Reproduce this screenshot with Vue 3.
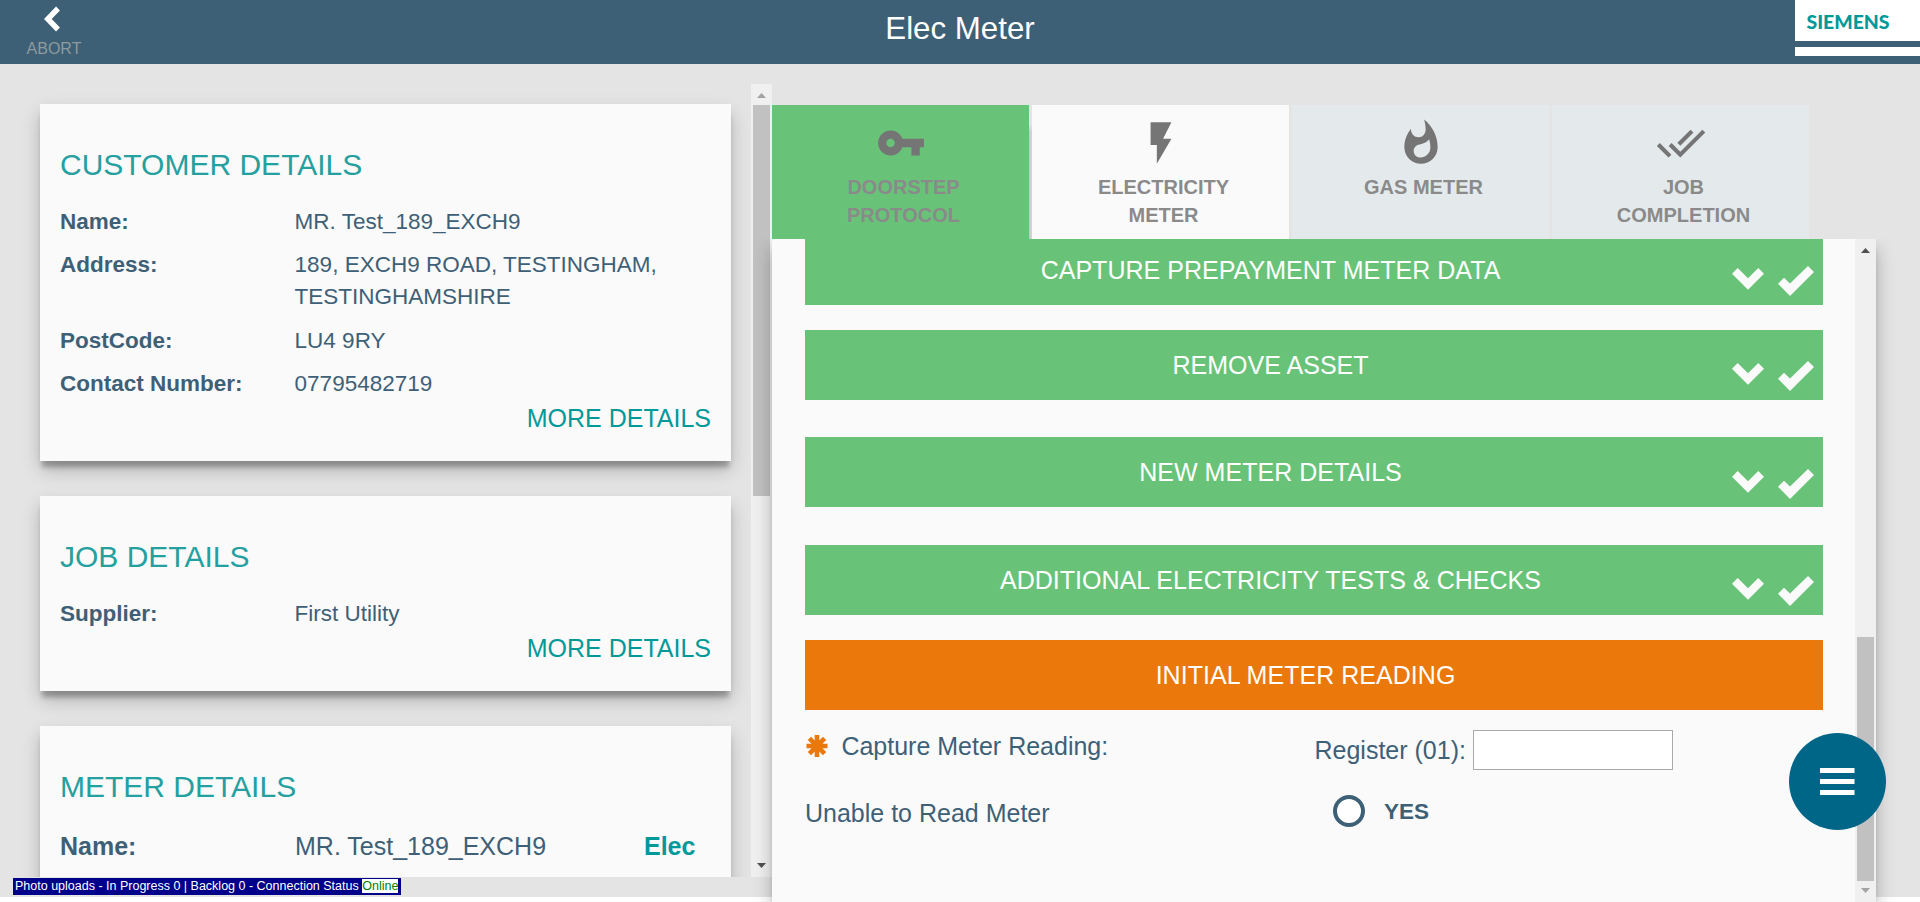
<script setup>
const cards = [
  {
    title: 'CUSTOMER DETAILS',
    kind: 'customer',
    rows: [
      { label: 'Name:', lines: ['MR. Test_189_EXCH9'] },
      { label: 'Address:', lines: ['189, EXCH9 ROAD, TESTINGHAM,', 'TESTINGHAMSHIRE'] },
      { label: 'PostCode:', lines: ['LU4 9RY'] },
      { label: 'Contact Number:', lines: ['07795482719'] },
    ],
    more: true,
  },
  {
    title: 'JOB DETAILS',
    kind: 'job',
    rows: [{ label: 'Supplier:', lines: ['First Utility'] }],
    more: true,
  },
  {
    title: 'METER DETAILS',
    kind: 'meter',
    rows: [{ label: 'Name:', lines: ['MR. Test_189_EXCH9'], tag: 'Elec' }],
    more: false,
  },
]

const tabs = [
  {
    lines: ['DOORSTEP', 'PROTOCOL'],
    state: 'done',
    icon: 'M12.65 10C11.83 7.67 9.61 6 7 6c-3.31 0-6 2.69-6 6s2.69 6 6 6c2.61 0 4.83-1.67 5.65-4H17v4h4v-4h2v-4H12.65zM7 14c-1.1 0-2-.9-2-2s.9-2 2-2 2 .9 2 2-.9 2-2 2z',
  },
  { lines: ['ELECTRICITY', 'METER'], state: 'active', icon: 'M7 2v11h3v9l7-12h-4l4-8z' },
  {
    lines: ['GAS METER'],
    state: 'idle',
    icon: 'M13.5.67s.74 2.65.74 4.8c0 2.06-1.35 3.73-3.41 3.73-2.07 0-3.63-1.67-3.63-3.73l.03-.36C5.21 7.51 4 10.62 4 14c0 4.42 3.58 8 8 8s8-3.58 8-8C20 8.61 17.41 3.8 13.5.67zM11.71 19c-1.78 0-3.22-1.4-3.22-3.14 0-1.62 1.05-2.76 2.81-3.12 1.77-.36 3.6-1.21 4.62-2.58.39 1.29.59 2.65.59 4.04 0 2.65-2.15 4.8-4.8 4.8z',
  },
  {
    lines: ['JOB', 'COMPLETION'],
    state: 'idle',
    icon: 'M18 7l-1.41-1.41-6.34 6.34 1.41 1.41L18 7zm4.24-1.41L11.66 16.17 7.48 12l-1.41 1.41L11.66 19l12-12-1.42-1.41zM.41 13.41L6 19l1.41-1.41L1.83 12 .41 13.41z',
  },
]

const sections = [
  { title: 'CAPTURE PREPAYMENT METER DATA', gap: 'near' },
  { title: 'REMOVE ASSET', gap: 'far' },
  { title: 'NEW METER DETAILS', gap: 'farther', low: true },
  { title: 'ADDITIONAL ELECTRICITY TESTS & CHECKS', gap: 'near' },
]
</script>

<template>
  <div class="page">
    <header class="topbar">
      <button class="abort">
        <svg class="back" width="16" height="26" viewBox="0 0 16 26">
          <path d="M14 2.5L3.8 13 14 23.5" fill="none" stroke="#fff" stroke-width="5.4" />
        </svg>
        <span>ABORT</span>
      </button>
      <h1>Elec Meter</h1>
      <div class="logo">
        <svg width="125" height="41" viewBox="0 0 125 41">
          <text x="11.5" y="28.6" textLength="83" lengthAdjust="spacingAndGlyphs">SIEMENS</text>
        </svg>
        <div class="stripe"></div>
      </div>
    </header>

    <div class="body">
      <div class="left">
        <div class="scroller">
          <div class="cards">
            <section v-for="c in cards" :key="c.title" class="card" :class="c.kind">
              <h2>{{ c.title }}</h2>
              <div class="rows">
                <div v-for="r in c.rows" :key="r.label" class="row">
                  <b class="label">{{ r.label }}</b>
                  <div class="value">
                    <div v-for="l in r.lines" :key="l">{{ l }}</div>
                  </div>
                  <b v-if="r.tag" class="tag">{{ r.tag }}</b>
                </div>
              </div>
              <a v-if="c.more" class="more">MORE DETAILS</a>
            </section>
          </div>
          <div class="bar">
            <svg class="arrow" width="21" height="21" viewBox="0 0 21 21"><path d="M6 14h9l-4.5-5z" fill="#a3a3a3" /></svg>
            <div class="thumb thumb-left"></div>
            <svg class="arrow end" width="21" height="21" viewBox="0 0 21 21"><path d="M6 7h9l-4.5 5z" fill="#505050" /></svg>
          </div>
        </div>
        <div class="status">
          Photo uploads - In Progress 0 | Backlog 0 - Connection Status <span class="online">Online</span>
        </div>
      </div>

      <div class="right">
        <nav class="tabs">
          <div v-for="t in tabs" :key="t.lines[0]" class="tab" :class="t.state">
            <svg width="50" height="50" viewBox="0 0 24 24"><path :d="t.icon" fill="#757575" /></svg>
            <div class="tab-label">
              <div v-for="l in t.lines" :key="l">{{ l }}</div>
            </div>
          </div>
        </nav>

        <main class="panel">
          <div class="content">
            <div v-for="s in sections" :key="s.title" class="section" :class="s.gap">
              <span class="section-title">{{ s.title }}</span>
              <div class="marks" :class="{ low: s.low }">
                <svg class="chev" width="32" height="22" viewBox="0 0 32 22">
                  <path d="M0 5.7L5.7 0 16 10.3 26.3 0 32 5.7 16 21.7z" fill="#fafafa" />
                </svg>
                <svg width="36" height="30" viewBox="0 0 36 30">
                  <path d="M0 17.8l6-6 6 5.6L30 0l6 6-24 24z" fill="#fafafa" />
                </svg>
              </div>
            </div>
            <div class="section current"><span class="section-title">INITIAL METER READING</span></div>

            <div class="field reading">
              <div class="question">
                <svg class="star" width="22" height="22" viewBox="0 0 22 22">
                  <path d="M11 0v22M0.5 11h21M3.4 3.4l15.2 15.2M18.6 3.4L3.4 18.6" stroke="#eb780a" stroke-width="4.6" />
                </svg>
                <span>Capture Meter Reading:</span>
              </div>
              <label class="register"><span>Register (01):</span><input type="text" /></label>
            </div>
            <div class="field unable">
              <div class="question">Unable to Read Meter</div>
              <label class="choice"><i class="radio"></i><b>YES</b></label>
            </div>
          </div>
          <div class="bar">
            <svg class="arrow" width="21" height="21" viewBox="0 0 21 21"><path d="M6 14h9l-4.5-5z" fill="#505050" /></svg>
            <div class="thumb thumb-right"></div>
            <svg class="arrow end" width="21" height="21" viewBox="0 0 21 21"><path d="M6 7h9l-4.5 5z" fill="#a3a3a3" /></svg>
          </div>
        </main>
      </div>
    </div>

    <button class="fab">
      <svg width="97" height="97" viewBox="0 0 97 97">
        <path d="M31 37.5h34.5M31 48.5h34.5M31 59.5h34.5" stroke="#fff" stroke-width="5" />
      </svg>
    </button>
  </div>
</template>

<style>
body {
  margin: 0;
  background: #fff;
}
</style>

<style scoped>
.page {
  position: relative;
  width: 1920px;
  height: 902px;
  overflow: hidden;
  background: linear-gradient(#e4e4e4 897px, #fff 897px);
  font-family: "Liberation Sans", Arial, sans-serif;
  color: #3e6077;
}
button {
  border: 0;
  padding: 0;
  background: none;
  font-family: inherit;
}
.topbar {
  height: 64px;
  background: #3e6077;
  display: grid;
  grid-template-columns: 125px 1fr 125px;
}
.abort {
  width: 108px;
  display: flex;
  flex-direction: column;
  align-items: center;
  color: #8e9a9b;
  font-size: 16px;
  line-height: 20px;
  padding-top: 6px;
}
.back {
  margin-right: 4px;
  margin-bottom: 7px;
}
h1 {
  margin: 0;
  text-align: center;
  color: #fff;
  font-size: 31.25px;
  font-weight: 400;
  line-height: 58px;
}
.logo {
  height: 56px;
  background: #fff;
}
.logo svg {
  display: block;
}
.logo text {
  font: 900 18px Lato, sans-serif;
  fill: #099;
}
.stripe {
  height: 6px;
  background: #3e6077;
}
.body {
  display: flex;
  height: 838px;
}
.left {
  width: 772px;
  padding-top: 20px;
  box-sizing: border-box;
}
.scroller {
  display: flex;
  height: 793px;
  overflow: hidden;
}
.cards {
  width: 691px;
  padding: 20px 20px 0 40px;
  display: flex;
  flex-direction: column;
  gap: 35px;
}
.card {
  flex: none;
  box-sizing: border-box;
  padding: 44px 20px 0 20px;
  background: #fafafa;
  box-shadow: 0 8px 5px -2px rgba(0, 0, 0, 0.26), 0 9px 18px -1px rgba(0, 0, 0, 0.24);
}
.customer {
  height: 357px;
}
.job {
  height: 195px;
}
.meter {
  height: 300px;
}
h2 {
  margin: 0 0 24px;
  font-size: 30px;
  line-height: 34px;
  font-weight: 400;
  color: #24a0a0;
}
.rows {
  display: flex;
  flex-direction: column;
  gap: 11.3px;
  font-size: 22.5px;
  line-height: 32px;
}
.row {
  display: grid;
  grid-template-columns: 234.6px 1fr auto;
}
.meter .row {
  grid-template-columns: 235px 1fr 67px;
  padding-top: 2px;
  font-size: 25px;
}
.tag {
  color: #099;
}
.more {
  display: block;
  margin-top: 4px;
  text-align: right;
  font-size: 25px;
  line-height: 28px;
  color: #099;
}
.bar {
  flex: none;
  width: 21px;
  display: flex;
  flex-direction: column;
  background: #f0f0f0;
}
.arrow {
  flex: none;
  display: block;
}
.end {
  margin-top: auto;
}
.thumb {
  margin: 0 2px;
  background: #c1c1c1;
}
.thumb-left {
  height: 391px;
}
.thumb-right {
  height: 244px;
  margin-top: 377px;
}
.status {
  width: 388px;
  height: 17px;
  box-sizing: border-box;
  margin: 1px 0 0 13px;
  padding: 1px 2px;
  background: #00008b;
  color: #fff;
  font-size: 12.5px;
  line-height: 14px;
  white-space: nowrap;
}
.online {
  display: inline-block;
  height: 14px;
  background: #fff;
  color: #008000;
}
.right {
  width: 1104px;
  display: flex;
  flex-direction: column;
}
.tabs {
  flex: none;
  display: flex;
  gap: 3px;
  padding-top: 41px;
}
.tab {
  width: 257px;
  height: 134px;
  box-sizing: border-box;
  padding-top: 13px;
  display: flex;
  flex-direction: column;
  align-items: center;
}
.done {
  background: #68c379;
  box-shadow: 5px 20px 5px -3px rgba(0, 0, 0, 0.17);
  clip-path: inset(0 -3px 0 0);
}
.active {
  position: relative;
  background: #fafafa;
}
.idle {
  background: #e4eaec;
}
.tab-label {
  margin-top: 5px;
  padding-left: 6px;
  text-align: center;
  font-size: 20px;
  line-height: 28px;
  font-weight: 700;
  color: #8a8a8a;
}
.panel {
  position: relative;
  flex: none;
  display: flex;
  height: 663px;
  background: #fafafa;
  box-shadow: 0 8px 5px -2px rgba(0, 0, 0, 0.2), 0 9px 18px -1px rgba(0, 0, 0, 0.3);
  clip-path: inset(0 -40px 0 -40px);
}
.content {
  width: 1018px;
  padding: 0 32px 0 33px;
  margin-top: -4px;
}
.section {
  height: 70px;
  display: flex;
  background: #68c379;
  color: #fff;
  font-size: 25px;
}
.section-title {
  flex: 1;
  text-align: center;
  line-height: 71px;
  letter-spacing: 0.03px;
}
.near {
  margin-bottom: 25px;
}
.far {
  margin-bottom: 37px;
}
.farther {
  margin-bottom: 38px;
}
.marks {
  display: flex;
  gap: 14px;
  align-items: flex-start;
  padding: 31px 9px 0 0;
  margin-left: -4px;
}
.low {
  padding-top: 32px;
}
.chev {
  margin-top: 2px;
}
.current {
  background: #eb780a;
  box-sizing: border-box;
  padding-right: 17px;
}
.field {
  display: grid;
  grid-template-columns: 510px 1fr;
  font-size: 25px;
  line-height: 30px;
}
.question {
  display: flex;
}
.reading {
  margin-top: 20px;
}
.reading .question {
  padding-top: 1px;
}
.star {
  margin: 4px 13.4px 0 1px;
}
.register {
  display: flex;
  align-items: center;
}
.register span {
  margin-left: -0.5px;
}
input {
  box-sizing: border-box;
  width: 200px;
  height: 40px;
  margin: 0 0 0 7.5px;
  border: 1px solid #a9a9a9;
  background: #fff;
}
.unable {
  margin-top: 25px;
}
.unable .question {
  padding-top: 3px;
}
.choice {
  display: flex;
  align-items: center;
  padding-left: 18px;
  font-size: 22.5px;
  height: 32px;
}
.radio {
  box-sizing: border-box;
  width: 32px;
  height: 32px;
  margin-right: 19px;
  border: 4px solid #3e6077;
  border-radius: 50%;
  background: #fff;
}
.choice b {
  padding-top: 2px;
}
.fab {
  position: absolute;
  left: 1788.5px;
  top: 732.5px;
  width: 97px;
  height: 97px;
  border-radius: 50%;
  background: #006687;
}
.fab svg {
  display: block;
}
</style>
